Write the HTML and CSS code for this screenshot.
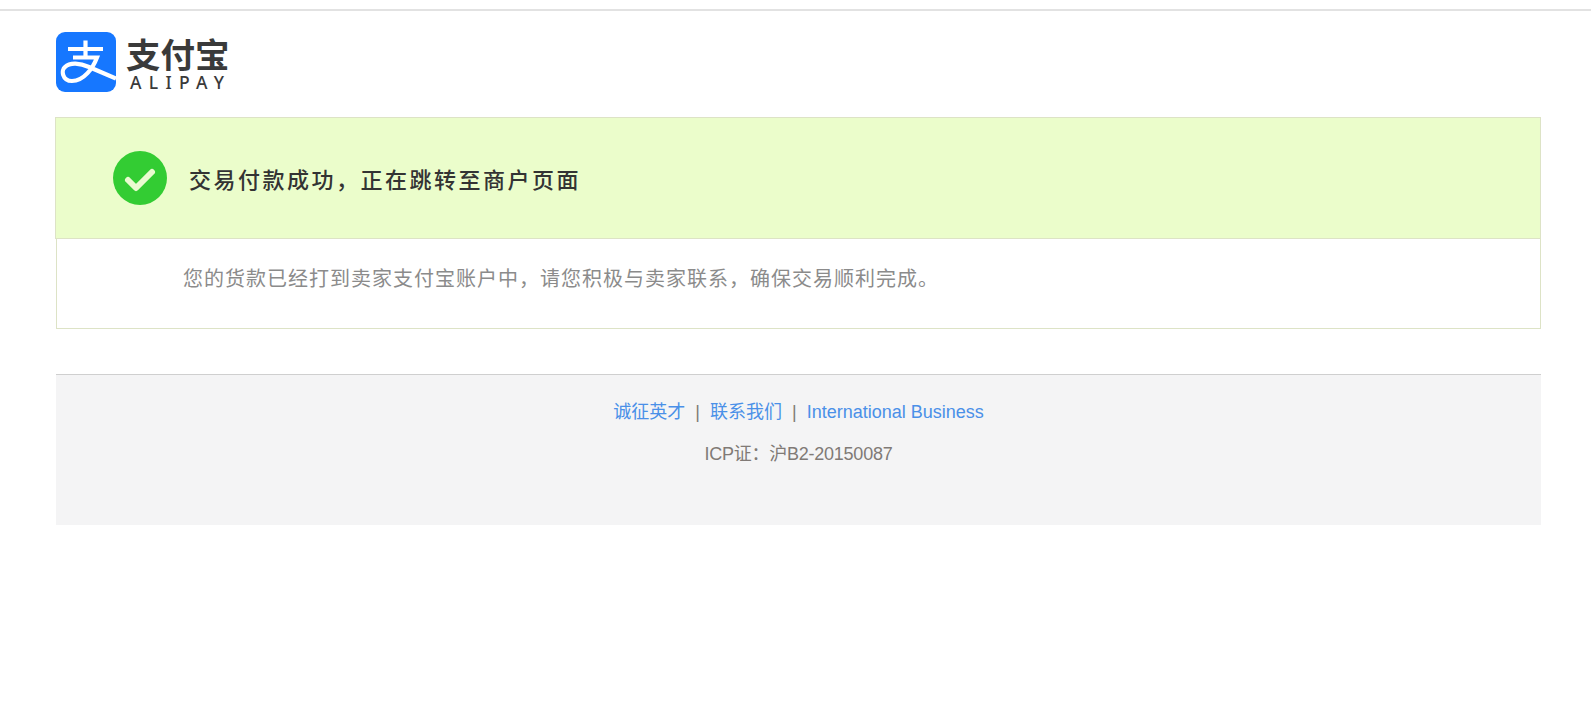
FILE: index.html
```html
<!DOCTYPE html>
<html lang="zh-CN">
<head>
<meta charset="utf-8">
<title>支付宝</title>
<link rel="stylesheet" href="styles.css">
</head>
<body>
<div class="topline"></div>
<header class="header">
  <svg class="mark" viewBox="0 0 60 60" aria-label="支付宝">
    <rect width="60" height="60" rx="9" fill="#1677ff"/>
    <path d="M12 17H47M29.500 8.500V25.500M17 25.500H41C37 36 28 49 16 49C6 49 5 38 9 35C14 30 24 31 33 35L60 46.500" fill="none" stroke="#fff" stroke-width="4.200"/>
  </svg>
  <div class="wordmark">
    <div class="wordmark-cn">支付宝</div>
    <div class="wordmark-en">ALIPAY</div>
  </div>
</header>
<main class="panel">
  <section class="panel-head">
    <svg class="check" viewBox="0 0 54 54" aria-hidden="true">
      <circle cx="27" cy="27" r="27" fill="#33cc33"/>
      <path d="M15 29L23 37L39 21" fill="none" stroke="#eafbd0" stroke-width="6" stroke-linecap="round" stroke-linejoin="round"/>
    </svg>
    <h1 class="title">交易付款成功&#xFF0C;正在跳转至商户页面</h1>
  </section>
  <section class="panel-body">
    <p class="message">您的货款已经打到卖家支付宝账户中&#xFF0C;请您积极与卖家联系&#xFF0C;确保交易顺利完成。</p>
  </section>
</main>
<footer class="footer">
  <nav class="links">
    <a href="#">诚征英才</a><span class="sep">|</span><a href="#">联系我们</a><span class="sep">|</span><a href="#" class="biz">International Business</a>
  </nav>
  <p class="icp">ICP证&#xFF1A;沪B2-20150087</p>
</footer>
</body>
</html>
```
FILE: styles.css
```css
* { box-sizing: border-box; }
html, body { margin: 0; padding: 0; background: #fff; }
body { font-family: "Liberation Sans", "Noto Sans CJK SC", sans-serif; height: 705px; overflow: hidden; }
.topline { height: 2px; margin-top: 9px; background: #e2e2e2; }
.header { display: flex; align-items: flex-start; gap: 10px; margin: 21px 0 0 56px; height: 85px; }
.mark { width: 60px; height: 60px; display: block; }
.wordmark { color: #3a3a3a; padding-top: 3px; }
.wordmark-cn { font: 700 34.500px/36px "Noto Sans CJK SC", sans-serif; margin-bottom: 2px; }
.wordmark-en { font: 500 17.500px/18px "Noto Sans", sans-serif; letter-spacing: 7.300px; padding-left: 4px; }
.panel { margin: 0 50px 0 55px; }
.panel-head { display: flex; align-items: center; height: 122px; padding-left: 57px; background: #ebfdcb; border: 1px solid #dde3c6; }
.check { width: 54px; height: 54px; display: block; }
.title { margin: 0 0 0 22px; font: 500 22px/30px "Noto Sans CJK SC", sans-serif; letter-spacing: 2.500px; color: #333; }
.panel-body { height: 90px; margin-left: 1px; padding: 24px 0 0 126px; border: 1px solid #dde3c6; border-top: 0; }
.message { margin: 0; font: 400 20px/30px "Noto Sans CJK SC", sans-serif; letter-spacing: 1px; color: #8b8b8b; }
.footer { height: 151px; margin: 45px 50px 0 56px; padding-top: 23px; background: #f4f4f5; border-top: 1px solid #cfcfcf; text-align: center; font-size: 18px; color: #807a76; }
.links { line-height: 28px; }
.links a { color: #4a90e8; text-decoration: none; }
.sep { margin: 0 10px; }
.icp { margin: 14px 0 0; line-height: 28px; letter-spacing: -.25px; }
```
